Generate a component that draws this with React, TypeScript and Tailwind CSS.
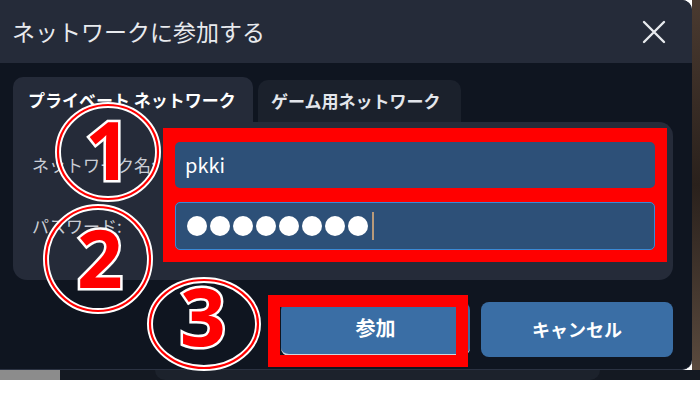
const jp = { fontFamily: '"Noto Sans CJK JP", "Noto Sans", sans-serif' };

function Marker({ cx, cy, rx, ry, n, tx, ty }: { cx: number; cy: number; rx: number; ry: number; n: string; tx: number; ty: number }) {
  return (
    <g>
      <ellipse cx={cx} cy={cy} rx={rx} ry={ry} fill="none" stroke="#ffffff" strokeWidth={6} />
      <ellipse cx={cx} cy={cy} rx={rx} ry={ry} fill="none" stroke="#ff0000" strokeWidth={2.2} />
      <text
        x={tx}
        y={ty}
        textAnchor="middle"
        fontSize={80}
        fontWeight={700}
        fill="#ff0000"
        stroke="#ffffff"
        strokeWidth={5}
        paintOrder="stroke"
        style={{ fontFamily: '"Noto Sans", "Liberation Sans", sans-serif' }}
      >
        {n}
      </text>
    </g>
  );
}

export default function App() {
  return (
    <div className="relative h-[396px] w-[700px] overflow-hidden bg-white" style={jp}>
      <div className="flex h-[370px]">
        <div className="flex w-[692px] flex-col overflow-hidden rounded-r-[10px] border-b border-[#2b3242] bg-[#0f1520]">
          <div className="flex h-[63px] shrink-0 items-center justify-between bg-[#252b39] pl-[12px] pr-[26px]">
            <span className="text-[23px] leading-none text-[#e8eaee]">ネットワークに参加する</span>
            <svg width="24" height="24" viewBox="0 0 24 24" className="text-[#e8eaee]">
              <path d="M2 2 L22 22 M22 2 L2 22" stroke="currentColor" strokeWidth="2.4" strokeLinecap="round" />
            </svg>
          </div>

          <div className="flex flex-1 flex-col pl-[13px] pr-[19px] pt-[14px]">
            <div className="flex h-[45px] items-end gap-[5px]">
              <div className="flex h-[45px] w-[240px] items-center rounded-t-[10px] bg-[#252b39] pl-[15px] text-[17px] font-bold text-white">
                プライベート ネットワーク
              </div>
              <div className="flex h-[42px] w-[203px] items-center rounded-t-[10px] bg-[#1b212c] pl-[13px] text-[17px] font-semibold text-[#e3e6eb]">
                ゲーム用ネットワーク
              </div>
            </div>

            <div className="flex h-[158px] flex-col rounded-b-[14px] rounded-tr-[14px] bg-[#252b39] pr-[18px] pt-[20px]">
              <div className="flex items-center">
                <div className="w-[162px] pl-[19px] text-[17px] text-[#c9cdd5]">ネットワーク名:</div>
                <div className="relative z-10 flex h-[46px] flex-1 items-center rounded-[5px] bg-[#2d5078] pl-[10px] text-[20px] text-white">
                  pkki
                </div>
              </div>
              <div className="mt-[14px] flex items-center">
                <div className="w-[162px] pl-[19px] text-[17px] text-[#c9cdd5]">パスワード:</div>
                <div className="relative z-10 flex h-[48px] flex-1 items-center gap-[3px] rounded-[5px] border border-[#3a8ad6] bg-[#2d5078] pl-[11px]">
                  {Array.from({ length: 8 }).map((_, i) => (
                    <span key={i} className="h-[20px] w-[20px] rounded-full bg-white" />
                  ))}
                  <span className="ml-[1px] h-[28px] w-[2px] bg-[#b89a7a]" />
                </div>
              </div>
            </div>

            <div className="mt-[22px] flex justify-end gap-[11px]">
              <button className="h-[54px] w-[189px] rounded-[8px] border-b-2 border-[#cfd6df] bg-[#3a6ea5] text-[20px] font-bold text-white">
                参加
              </button>
              <button className="h-[55px] w-[192px] rounded-[8px] bg-[#3a6ea5] text-[18px] font-bold text-white">
                キャンセル
              </button>
            </div>
          </div>
        </div>
        <div className="flex-1 bg-gradient-to-b from-[#4a3a30] via-[#2a211c] to-[#5a4a3e]" />
      </div>

      <div className="flex h-[10px] bg-[#141922]">
        <div className="w-[60px] bg-[#8c8c8c]" />
        <div className="ml-[95px] w-[445px] rounded-b-[10px] bg-[#1c222c]" />
      </div>

      {/* annotations */}
      <div className="absolute left-[163px] top-[128px] h-[134px] w-[504px] bg-[#ff0000]" />
      <div className="absolute left-[268px] top-[295px] z-20 h-[72px] w-[200px] border-[12px] border-[#ff0000]" />
      <svg className="pointer-events-none absolute left-0 top-0 z-30" width="700" height="396">
        <Marker cx={108} cy={152} rx={50} ry={47} n="1" tx={108} ty={180} />
        <Marker cx={98} cy={259} rx={52} ry={52} n="2" tx={100} ty={288} />
        <Marker cx={204} cy={324} rx={54} ry={44} n="3" tx={203} ty={346} />
      </svg>
    </div>
  );
}
